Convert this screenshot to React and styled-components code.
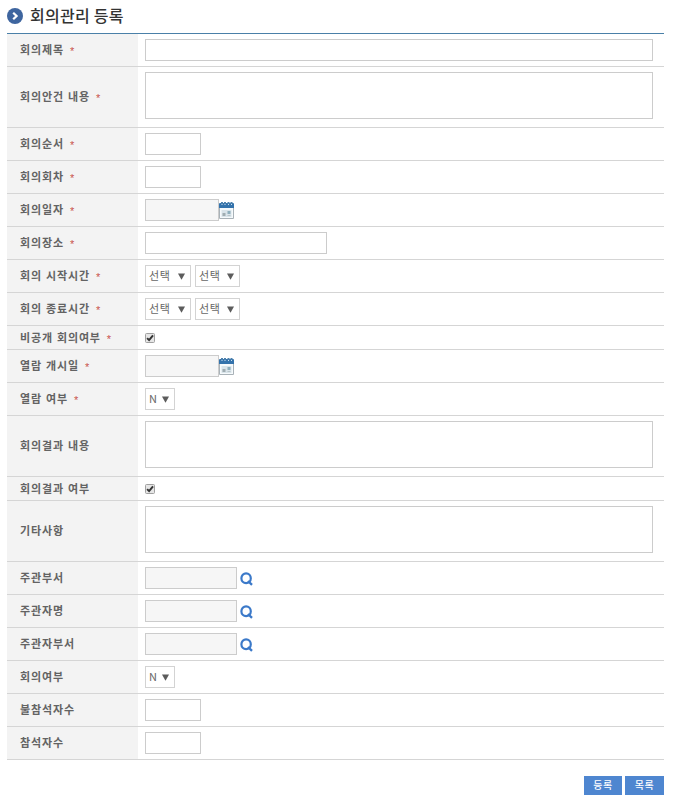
import React from 'react';
import styled, { createGlobalStyle } from 'styled-components';

const GlobalStyle = createGlobalStyle`
  * { box-sizing: border-box; }
  body {
    margin: 0;
    background: #fff;
    font-family: "Noto Sans CJK KR", "Liberation Sans", sans-serif;
    font-size: 12px;
    color: #555;
  }
`;

const Page = styled.main`
  width: 679px;
  height: 804px;
  padding: 0 15px 0 7px;
  overflow: hidden;
`;

const Header = styled.header`
  display: flex;
  align-items: center;
  gap: 7px;
  height: 33px;
  padding-bottom: 2px;
`;

const Title = styled.h1`
  margin: -2px 0 0;
  font-size: 16px;
  font-weight: 500;
  line-height: 24px;
  letter-spacing: 0.25px;
  color: #333;
`;

const Form = styled.form`
  border-top: 1px solid #4a80a8;
`;

const Row = styled.div`
  display: grid;
  grid-template-columns: 131px 1fr;
  height: ${(p) => p.$height}px;
  border-bottom: 1px solid #d5d5d5;
`;

const Label = styled.label`
  display: flex;
  align-items: center;
  padding: 0 0 ${(p) => (p.$compact ? 1 : 3)}px 13px;
  background: #f3f3f3;
  font-weight: 700;
  font-size: 11px;
  line-height: 18px;
  letter-spacing: 0.85px;
  word-spacing: 0.7px;
  white-space: nowrap;
  color: #636363;
`;

const Required = styled.span`
  margin: 4px 0 0 6px;
  font: 400 11px/14px "Liberation Sans", sans-serif;
  color: #c9524c;
`;

const Field = styled.div`
  display: flex;
  align-items: flex-start;
  gap: ${(p) => p.$gap || 0}px;
  padding: ${(p) => p.$top || 5}px 0 0 7px;
`;

const Input = styled.input`
  width: ${(p) => p.$width}px;
  height: 22px;
  margin: 0;
  padding: 0 4px;
  border: 1px solid #ccc;
  border-radius: 0;
  outline: 0;
  background: ${(p) => (p.readOnly ? '#f6f6f6' : '#fff')};
`;

const TextArea = styled.textarea`
  display: block;
  width: 508px;
  height: 47px;
  margin: 0;
  padding: 4px;
  border: 1px solid #ccc;
  border-radius: 0;
  outline: 0;
  resize: none;
`;

const SelectBox = styled.button.attrs({ type: 'button' })`
  display: flex;
  align-items: center;
  justify-content: space-between;
  width: ${(p) => p.$width}px;
  height: 22px;
  padding: 0 5px 2px 3px;
  border: 1px solid #d3d3d3;
  background: #fff;
  font-family: inherit;
  font-size: 11px;
  font-weight: 400;
  line-height: 16px;
  letter-spacing: 0.6px;
  color: #666;
`;

const Arrow = styled.svg`
  width: 7px;
  height: 7px;
  margin-top: 2px;
  fill: #5c5c5c;
`;

const CalendarSvg = styled.svg`
  width: 15px;
  height: 17px;
  margin-top: 3px;
`;

const SearchSvg = styled.svg`
  width: 13px;
  height: 14px;
  margin-top: 5px;
`;

const CheckSvg = styled.svg`
  width: 10px;
  height: 10px;
`;

const Actions = styled.div`
  display: flex;
  justify-content: flex-end;
  gap: 3px;
  margin-top: 16px;
`;

const ActionButton = styled.button.attrs({ type: 'button' })`
  width: ${(p) => p.$width}px;
  height: 19px;
  padding: 0 0 2px;
  border: 0;
  background: #4e86d0;
  font-family: inherit;
  font-size: 10px;
  font-weight: 500;
  line-height: 17px;
  letter-spacing: 0.5px;
  color: #fff;
`;

const TitleIcon = () => (
  <svg width="16" height="16" viewBox="0 0 16 16" aria-hidden="true">
    <circle cx="8" cy="8" r="8" fill="#3e659f" />
    <path d="M6.2 4.7 9.6 8 6.2 11.3" fill="none" stroke="#fff" strokeWidth="2.2" />
  </svg>
);

const Calendar = () => (
  <CalendarSvg viewBox="0 0 15 17" aria-label="달력">
    <path d="M.5 3.5h14v13H.5z" fill="#f6fafc" stroke="#a9b2b8" />
    <path d="M0 2q0-1 1-1h13q1 0 1 1v4H0z" fill="#3473ac" />
    <path d="M2 0h2v2H2zM5 0h2v2H5zM8.5 0h2v2h-2zM11.5 0h2v2h-2z" fill="#4b80ad" />
    <path d="M2.5 2h1v1h-1zM5.5 2h1v1h-1zM9 2h1v1H9zM12 2h1v1h-1z" fill="#c9dfef" />
    <path d="M2.5 8h10v7h-10z" fill="#d9e4ea" />
    <path d="M3.5 11h3v3h-3z" fill="#a0adb2" />
    <path d="M8.5 9h3v3h-3z" fill="#8eafbd" />
    <path d="M8.5 13h3v1h-3z" fill="#b8c4c9" />
  </CalendarSvg>
);

const Search = () => (
  <SearchSvg viewBox="0 0 13 14" aria-label="검색">
    <ellipse cx="6.1" cy="6.3" rx="4.7" ry="4.9" fill="none" stroke="#3b79c9" strokeWidth="2.2" />
    <path d="m8 9 4 3.8" stroke="#3b79c9" strokeWidth="2.4" />
  </SearchSvg>
);

const Check = () => (
  <CheckSvg viewBox="0 0 10 10" role="checkbox" aria-checked="true">
    <rect x=".5" y=".5" width="9" height="9" rx="1" fill="#e6e6e6" stroke="#a0a0a0" />
    <path d="m2.1 5.1 2 2L8 2.3" fill="none" stroke="#333" strokeWidth="2" />
  </CheckSvg>
);

const Select = ({ text, width }) => (
  <SelectBox $width={width}>
    {text}
    <Arrow viewBox="0 0 7 7"><path d="M0 .5h7L3.5 6.8z" /></Arrow>
  </SelectBox>
);

const fields = {
  text: (width) => <Field><Input $width={width} /></Field>,
  area: () => <Field><TextArea /></Field>,
  date: () => <Field><Input $width={74} readOnly /><Calendar /></Field>,
  time: () => <Field $gap={4}><Select text="선택" width={46} /><Select text="선택" width={45} /></Field>,
  flag: () => <Field><Select text="N" width={30} /></Field>,
  check: () => <Field $top={7}><Check /></Field>,
  search: () => <Field $gap={3}><Input $width={92} readOnly /><Search /></Field>,
};

const heights = { area: 61, check: 24 };

const rows = [
  { label: '회의제목', type: 'text', width: 508, required: true },
  { label: '회의안건 내용', type: 'area', required: true },
  { label: '회의순서', type: 'text', width: 56, required: true },
  { label: '회의회차', type: 'text', width: 56, required: true },
  { label: '회의일자', type: 'date', required: true },
  { label: '회의장소', type: 'text', width: 182, required: true },
  { label: '회의 시작시간', type: 'time', required: true },
  { label: '회의 종료시간', type: 'time', required: true },
  { label: '비공개 회의여부', type: 'check', required: true },
  { label: '열람 개시일', type: 'date', required: true },
  { label: '열람 여부', type: 'flag', required: true },
  { label: '회의결과 내용', type: 'area' },
  { label: '회의결과 여부', type: 'check' },
  { label: '기타사항', type: 'area' },
  { label: '주관부서', type: 'search' },
  { label: '주관자명', type: 'search' },
  { label: '주관자부서', type: 'search' },
  { label: '회의여부', type: 'flag' },
  { label: '불참석자수', type: 'text', width: 56 },
  { label: '참석자수', type: 'text', width: 56 },
];

export default function App() {
  return (
    <Page>
      <GlobalStyle />
      <Header>
        <TitleIcon />
        <Title>회의관리 등록</Title>
      </Header>
      <Form>
        {rows.map((row) => (
          <Row key={row.label} $height={heights[row.type] || 33}>
            <Label $compact={row.type === 'check'}>
              {row.label}
              {row.required && <Required>*</Required>}
            </Label>
            {fields[row.type](row.width)}
          </Row>
        ))}
      </Form>
      <Actions>
        <ActionButton $width={38}>등록</ActionButton>
        <ActionButton $width={39}>목록</ActionButton>
      </Actions>
    </Page>
  );
}
